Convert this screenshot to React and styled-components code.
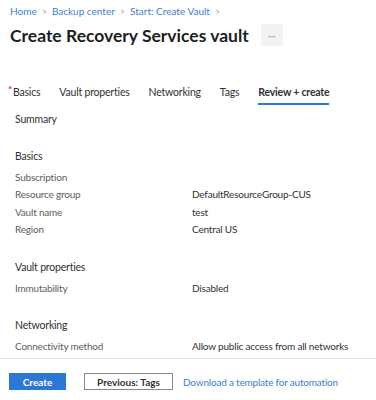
import styled, { createGlobalStyle } from "styled-components";

const GlobalStyle = createGlobalStyle`
  body {
    margin: 0;
    background: #ffffff;
    font-family: Lato, "Noto Sans", sans-serif;
    color: #323130;
  }
`;

const basics = [
  ["Subscription", ""],
  ["Resource group", "DefaultResourceGroup-CUS"],
  ["Vault name", "test"],
  ["Region", "Central US"],
];

const tabs = ["Basics", "Vault properties", "Networking", "Tags", "Review + create"];

export default function App() {
  return (
    <Page>
      <GlobalStyle />
      <Header>
        <Breadcrumb>
          <Crumb>Home</Crumb>
          <Chevron>&gt;</Chevron>
          <Crumb>Backup center</Crumb>
          <Chevron>&gt;</Chevron>
          <Crumb>Start: Create Vault</Crumb>
          <Chevron>&gt;</Chevron>
        </Breadcrumb>
        <TitleRow>
          <Title>Create Recovery Services vault</Title>
          <MoreBtn type="button">···</MoreBtn>
        </TitleRow>
      </Header>

      <TabBar>
        {tabs.map((t, i) => (
          <Tab key={t} $active={i === tabs.length - 1}>
            {i === 0 && <Req>*</Req>}
            {t}
          </Tab>
        ))}
      </TabBar>

      <Body>
        <Summary>Summary</Summary>

        <SectionTitle>Basics</SectionTitle>
        {basics.map(([k, v]) => (
          <Row key={k}>
            <Label>{k}</Label>
            <Value>{v}</Value>
          </Row>
        ))}

        <SectionTitle $spaced>Vault properties</SectionTitle>
        <Row>
          <Label>Immutability</Label>
          <Value>Disabled</Value>
        </Row>

        <SectionTitle $spaced>Networking</SectionTitle>
        <Row>
          <Label>Connectivity method</Label>
          <Value>Allow public access from all networks</Value>
        </Row>
      </Body>

      <Footer>
        <PrimaryBtn type="button">Create</PrimaryBtn>
        <SecondaryBtn type="button">Previous: Tags</SecondaryBtn>
        <Link href="#">Download a template for automation</Link>
      </Footer>
    </Page>
  );
}

const Page = styled.div`
  width: 376px;
  height: 400px;
  overflow: hidden;
  font-size: 10px;
  letter-spacing: -0.2px;
  display: flex;
  flex-direction: column;
  white-space: nowrap;
`;

const Header = styled.div`
  padding: 4px 10px 0;
`;

const Breadcrumb = styled.div`
  display: flex;
  align-items: center;
  gap: 5px;
  height: 14px;
  font-size: 10px;
  letter-spacing: 0;
`;

const Crumb = styled.span`
  color: #3a7fd4;
`;

const Chevron = styled.span`
  color: #8a8886;
  font-size: 9px;
  transform: scaleX(0.7);
`;

const TitleRow = styled.div`
  display: flex;
  align-items: center;
  gap: 12px;
  margin-top: 6px;
  height: 22px;
`;

const Title = styled.h1`
  margin: 0;
  font-size: 17.5px;
  font-weight: 700;
  color: #201f1e;
  letter-spacing: 0;
`;

const MoreBtn = styled.button`
  width: 22px;
  height: 22px;
  border: none;
  background: #f3f2f1;
  color: #8a8886;
  font-size: 9px;
  padding: 0;
  font-family: inherit;
`;

const TabBar = styled.div`
  display: flex;
  gap: 19px;
  padding: 0 13px;
  margin-top: 40px;
`;

const Tab = styled.div`
  position: relative;
  font-size: 10.5px;
  padding-bottom: 5px;
  color: #323130;
  font-weight: ${(p) => (p.$active ? 700 : 400)};
  border-bottom: 2px solid ${(p) => (p.$active ? "#2b78d6" : "transparent")};
`;

const Req = styled.span`
  position: absolute;
  left: -5px;
  top: -3px;
  color: #d13438;
  font-size: 10px;
  font-weight: 700;
`;

const Body = styled.div`
  flex: 1;
  padding: 0 15px;
`;

const Summary = styled.div`
  margin-top: 6px;
  height: 17px;
  line-height: 17px;
  margin-bottom: 20px;
  font-size: 10.5px;
`;

const SectionTitle = styled.div`
  height: 17px;
  line-height: 17px;
  margin-top: ${(p) => (p.$spaced ? "20px" : "0")};
  margin-bottom: 4px;
  font-size: 10.5px;
`;

const Row = styled.div`
  display: flex;
  height: 17.4px;
  line-height: 17.4px;
`;

const Label = styled.div`
  width: 177px;
  flex-shrink: 0;
  color: #605e5c;
`;

const Value = styled.div`
  color: #323130;
`;

const Footer = styled.div`
  height: 42px;
  border-top: 1px solid #e1dfdd;
  display: flex;
  align-items: center;
  padding: 4px 9px 0;
  box-sizing: border-box;
  gap: 10px;
`;

const PrimaryBtn = styled.button`
  width: 57px;
  height: 17px;
  border: none;
  background: #2b78d6;
  color: #fff;
  font-family: inherit;
  font-size: 10px;
  font-weight: 700;
  padding: 0;
  margin-right: 8px;
`;

const SecondaryBtn = styled.button`
  width: 89px;
  height: 17px;
  border: 1px solid #8a8886;
  background: #fff;
  color: #323130;
  font-family: inherit;
  font-size: 10px;
  font-weight: 700;
  padding: 0;
`;

const Link = styled.a`
  color: #3a7fd4;
  text-decoration: none;
`;
